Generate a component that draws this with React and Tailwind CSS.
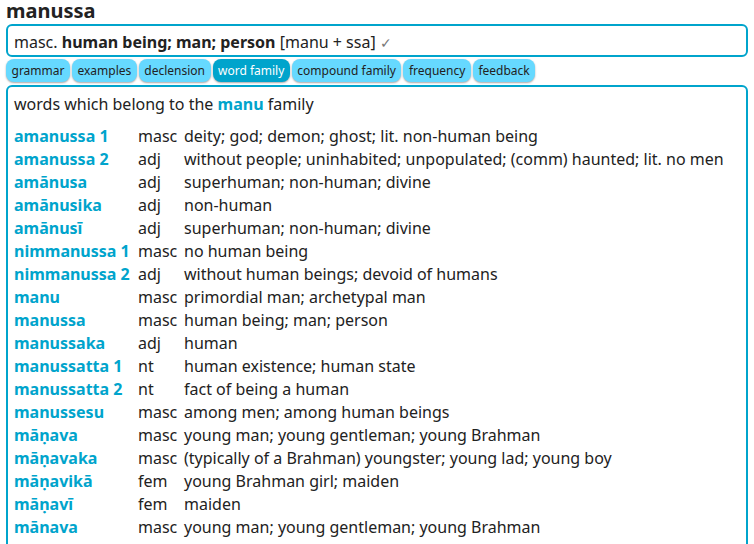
const rows = [
  ['amanussa 1', 'masc', 'deity; god; demon; ghost; lit. non-human being'],
  ['amanussa 2', 'adj', 'without people; uninhabited; unpopulated; (comm) haunted; lit. no men'],
  ['amānusa', 'adj', 'superhuman; non-human; divine'],
  ['amānusika', 'adj', 'non-human'],
  ['amānusī', 'adj', 'superhuman; non-human; divine'],
  ['nimmanussa 1', 'masc', 'no human being'],
  ['nimmanussa 2', 'adj', 'without human beings; devoid of humans'],
  ['manu', 'masc', 'primordial man; archetypal man'],
  ['manussa', 'masc', 'human being; man; person'],
  ['manussaka', 'adj', 'human'],
  ['manussatta 1', 'nt', 'human existence; human state'],
  ['manussatta 2', 'nt', 'fact of being a human'],
  ['manussesu', 'masc', 'among men; among human beings'],
  ['māṇava', 'masc', 'young man; young gentleman; young Brahman'],
  ['māṇavaka', 'masc', '(typically of a Brahman) youngster; young lad; young boy'],
  ['māṇavikā', 'fem', 'young Brahman girl; maiden'],
  ['māṇavī', 'fem', 'maiden'],
  ['mānava', 'masc', 'young man; young gentleman; young Brahman'],
];

const tabs = ['grammar', 'examples', 'declension', 'word family', 'compound family', 'frequency', 'feedback'];

export default function App() {
  return (
    <div className="h-[544px] overflow-hidden bg-white px-[6px] text-[#222] font-['Noto_Sans',sans-serif]">
      <h1 className="text-[20px] font-bold leading-[24px] -mt-[1px] mb-[1px]">manussa</h1>

      <div className="h-[33px] rounded-[6px] border-2 border-[#00a4cc] px-[6px] pt-[4px] text-[16px] leading-[25px]">
        masc. <b>human being; man; person</b> [manu + ssa] <span className="text-[#777] text-[14px]">✓</span>
      </div>

      <div className="mt-[2px] flex gap-[2px]">
        {tabs.map((t) => (
          <button
            key={t}
            className={
              'h-[23px] rounded-[8px] px-[5.5px] text-[12px] leading-[22px] shadow-[0_1px_2px_rgba(0,0,0,0.35)] ' +
              (t === 'word family' ? 'bg-[#00a4cc] text-white' : 'bg-[#66d9ff] text-[#222]')
            }
          >
            {t}
          </button>
        ))}
      </div>

      <div className="mt-[3px] h-[500px] rounded-[6px] border-2 border-[#00a4cc] px-[6px] pt-[6px] text-[16px] leading-[23px]">
        <p>
          words which belong to the <b className="text-[#00a4cc]">manu</b> family
        </p>
        <div className="mt-[9px] grid grid-cols-[124px_46px_1fr]">
          {rows.map(([w, p, m]) => (
            <div key={w} className="contents">
              <span className="font-bold text-[#00a4cc]">{w}</span>
              <span>{p}</span>
              <span className="whitespace-nowrap">{m}</span>
            </div>
          ))}
        </div>
      </div>
    </div>
  );
}
